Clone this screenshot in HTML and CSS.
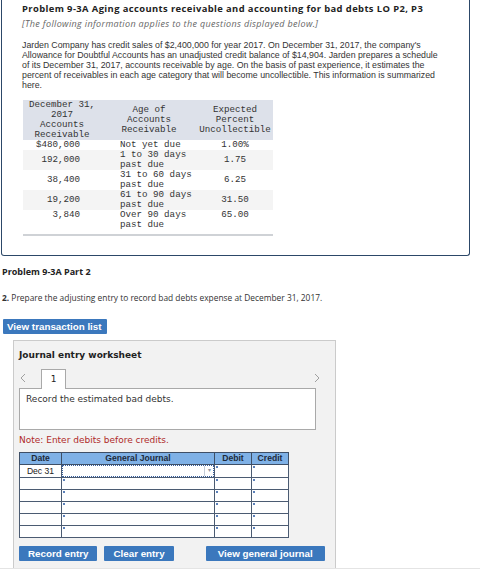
FILE: index.html
```html
<!DOCTYPE html>
<html lang="en">
<head>
    <meta charset="UTF-8">
    <meta name="viewport" content="width=device-width, initial-scale=1.0">
    <title>Problem 9-3A</title>
    <link rel="stylesheet" href="styles.css">
</head>
<body>

    <div class="intro">
        <h1 class="problem-title">Problem 9-3A Aging accounts receivable and accounting for bad debts LO P2, P3</h1>
        <p class="applies">[The following information applies to the questions displayed below.]</p>
        <p class="story">Jarden Company has credit sales of $2,400,000 for year 2017. On December 31, 2017, the company's<br>
            Allowance for Doubtful Accounts has an unadjusted credit balance of $14,904. Jarden prepares a schedule<br>
            of its December 31, 2017, accounts receivable by age. On the basis of past experience, it estimates the<br>
            percent of receivables in each age category that will become uncollectible. This information is summarized<br>
            here.</p>

        <table class="aging">
            <thead>
                <tr>
                    <th class="c1">December 31,<br>2017<br>Accounts<br>Receivable</th>
                    <th class="c2">Age of<br>Accounts<br>Receivable</th>
                    <th class="c3">Expected<br>Percent<br>Uncollectible</th>
                </tr>
            </thead>
            <tbody>
                <tr>
                    <td class="c1">$480,000</td>
                    <td class="c2">Not yet due</td>
                    <td class="c3">1.00%</td>
                </tr>
                <tr>
                    <td class="c1">192,000</td>
                    <td class="c2">1 to 30 days<br>past due</td>
                    <td class="c3">1.75</td>
                </tr>
                <tr>
                    <td class="c1">38,400</td>
                    <td class="c2">31 to 60 days<br>past due</td>
                    <td class="c3">6.25</td>
                </tr>
                <tr>
                    <td class="c1">19,200</td>
                    <td class="c2">61 to 90 days<br>past due</td>
                    <td class="c3">31.50</td>
                </tr>
                <tr>
                    <td class="c1">3,840</td>
                    <td class="c2">Over 90 days<br>past due</td>
                    <td class="c3">65.00</td>
                </tr>
            </tbody>
        </table>
    </div>

    <h2 class="part-title">Problem 9-3A Part 2</h2>
    <p class="question"><b>2.</b> Prepare the adjusting entry to record bad debts expense at December 31, 2017.</p>

    <button class="btn btn-list">View transaction list</button>

    <div class="worksheet">
        <h3>Journal entry worksheet</h3>

        <div class="tabs">
            <span class="nav">
                <svg width="6" height="10" viewBox="0 0 6 10"><path d="M5 1 1 5l4 4" fill="none" stroke="#a0a0a0" stroke-width="1"/></svg>
            </span>
            <span class="tab">1</span>
            <span class="nav nav-next">
                <svg width="6" height="10" viewBox="0 0 6 10"><path d="M1 1l4 4-4 4" fill="none" stroke="#a0a0a0" stroke-width="1"/></svg>
            </span>
        </div>
        <div class="task">Record the estimated bad debts.</div>

        <p class="note">Note: Enter debits before credits.</p>

        <table class="journal">
            <thead>
                <tr>
                    <th class="j-date">Date</th>
                    <th class="j-acct">General Journal</th>
                    <th class="j-amt">Debit</th>
                    <th class="j-amt">Credit</th>
                </tr>
            </thead>
            <tbody>
                <tr>
                    <td class="j-date">Dec 31</td>
                    <td class="j-acct"><div class="picker"><span class="picker-val"></span><span class="picker-arrow">&#9662;</span></div></td>
                    <td class="inp"></td>
                    <td class="inp"></td>
                </tr>
                <tr><td></td><td class="inp"></td><td class="inp"></td><td class="inp"></td></tr>
                <tr><td></td><td class="inp"></td><td class="inp"></td><td class="inp"></td></tr>
                <tr><td></td><td class="inp"></td><td class="inp"></td><td class="inp"></td></tr>
                <tr><td></td><td class="inp"></td><td class="inp"></td><td class="inp"></td></tr>
                <tr><td></td><td class="inp"></td><td class="inp"></td><td class="inp"></td></tr>
            </tbody>
        </table>

        <div class="actions">
            <button class="btn">Record entry</button>
            <button class="btn">Clear entry</button>
            <button class="btn btn-view">View general journal</button>
        </div>
    </div>

    <div class="page-rule"></div>

</body>
</html>
```

FILE: styles.css
```css
body {
    margin: 0;
    font-family: "Open Sans", Lato, sans-serif;
    font-size: 8.4px;
    color: #333;
    background: #fff;
}

/* problem statement card */
.intro {
    width: 427px;
    margin-left: 1px;
    padding: 4px 20px 19px 20px;
    border: 1px solid #2c4868;
    border-top: none;
    border-radius: 0 0 3px 3px;
}
.problem-title {
    margin: 0;
    font-size: 9.4px;
    letter-spacing: 0.4px;
    line-height: 10px;
    font-weight: 700;
    color: #222;
}
.applies {
    margin: 5px 0 0;
    font-size: 9px;
    letter-spacing: 0.35px;
    line-height: 10px;
    font-style: italic;
    color: #666;
}
.story {
    margin: 11px 0 0;
    font-family: "Liberation Sans", Arial, sans-serif;
    font-size: 8.8px;
    line-height: 10px;
    width: 440px;
    white-space: nowrap;
}

.aging {
    margin: 10px 0 0 1px;
    width: 250px;
    border-collapse: collapse;
    font-family: "Liberation Mono", monospace;
    font-size: 9.2px;
    line-height: 10px;
    color: #333;
    border-bottom: 2px solid #cfd2d6;
}
.aging th {
    background: #dde1ea;
    font-weight: normal;
    padding: 0;
    height: 40px;
    text-align: center;
}
.aging td {
    padding: 0;
    height: 20px;
}
.aging tbody tr:first-child td {
    height: 10px;
}
.aging tbody tr:nth-child(even) td {
    background: #f4f4f4;
}
.aging tbody tr:last-child td {
    height: 24px;
    vertical-align: top;
}
.aging th.c1 { width: 78px; }
.aging th.c2 { width: 96px; }
.aging td.c1 { text-align: right; padding-right: 21px; }
.aging td.c2 { padding-left: 19px; }
.aging td.c3 { text-align: center; }

/* part 2 */
.part-title {
    margin: 11px 0 0 2px;
    font-size: 9px;
    line-height: 10px;
    font-weight: 700;
    color: #222;
}
.question {
    margin: 16px 0 0 2px;
    line-height: 10px;
}

.btn {
    height: 15px;
    padding: 0 9px;
    border: none;
    border-radius: 1px;
    background: #3b78bd;
    color: #fff;
    font-family: "Liberation Sans", Arial, sans-serif;
    font-weight: 700;
    font-size: 9.8px;
    line-height: 15px;
}
.btn-list {
    display: block;
    margin: 16px 0 0 3px;
    padding: 0 5px 0 4px;
}

/* journal entry worksheet */
.worksheet {
    width: 316px;
    margin: 6px 0 0 13px;
    padding: 9px 0 7px 5px;
    background: #f2f2f2;
    border: 1px solid #cbcbcb;
    border-bottom: none;
    font-family: "DejaVu Sans", Verdana, sans-serif;
    font-size: 9px;
    color: #333;
}
.worksheet h3 {
    margin: 0;
    font-size: 9px;
    line-height: 10px;
    font-weight: 700;
    color: #222;
}
.tabs {
    display: flex;
    align-items: flex-end;
    width: 297px;
    margin-top: 8px;
}
.nav {
    display: flex;
    align-items: center;
    height: 20px;
    width: 21px;
    padding-left: 1px;
}
.nav-next {
    margin-left: auto;
    width: auto;
    padding: 0;
    margin-right: -4px;
}
.tab {
    width: 23px;
    height: 19px;
    line-height: 18px;
    text-align: center;
    background: #fff;
    border: 1px solid #a9a9a9;
    border-bottom: none;
    margin-bottom: -1px;
    position: relative;
    z-index: 1;
    color: #222;
}
.task {
    width: 289px;
    height: 30px;
    padding: 5px 0 5px 6px;
    background: #fff;
    border: 1px solid #a9a9a9;
    line-height: 10px;
}
.note {
    margin: 5px 0 0;
    line-height: 10px;
    color: #b02a2a;
}

.journal {
    margin-top: 7px;
    border-collapse: collapse;
    font-family: "Liberation Sans", Arial, sans-serif;
    font-size: 8.6px;
    color: #222;
    border: 1px solid #3e4f66;
}
.journal th {
    height: 11px;
    padding: 0;
    background: #7fb1e6;
    font-weight: 700;
    line-height: 11px;
    border: 1px solid #3e4f66;
    color: #1d2a3a;
}
.journal td {
    height: 11px;
    padding: 0;
    background: #fff;
    border: 1px solid #4b5b72;
    line-height: 11px;
}
.journal .j-date { width: 41px; text-align: center; }
.journal .j-acct { width: 152px; }
.journal .j-amt { width: 36px; }
.journal td.inp {
    background: linear-gradient(#5b80b9, #5b80b9) 1px 1px / 2px 2px no-repeat, #fff;
}
.picker {
    display: flex;
    height: 10px;
    border: 1px dotted #37609f;
}
.picker-val {
    flex: 1;
}
.picker-arrow {
    width: 8px;
    border-left: 1px solid #c5cdd8;
    font-size: 6px;
    line-height: 9px;
    text-align: center;
    color: #8a96a6;
}

.actions {
    display: flex;
    margin-top: 8px;
}
.actions .btn {
    margin-right: 7px;
}
.actions .btn-view {
    margin-left: 25px;
    padding: 0 12px;
}

.page-rule {
    border-top: 1px solid #e4e4e4;
}
```
